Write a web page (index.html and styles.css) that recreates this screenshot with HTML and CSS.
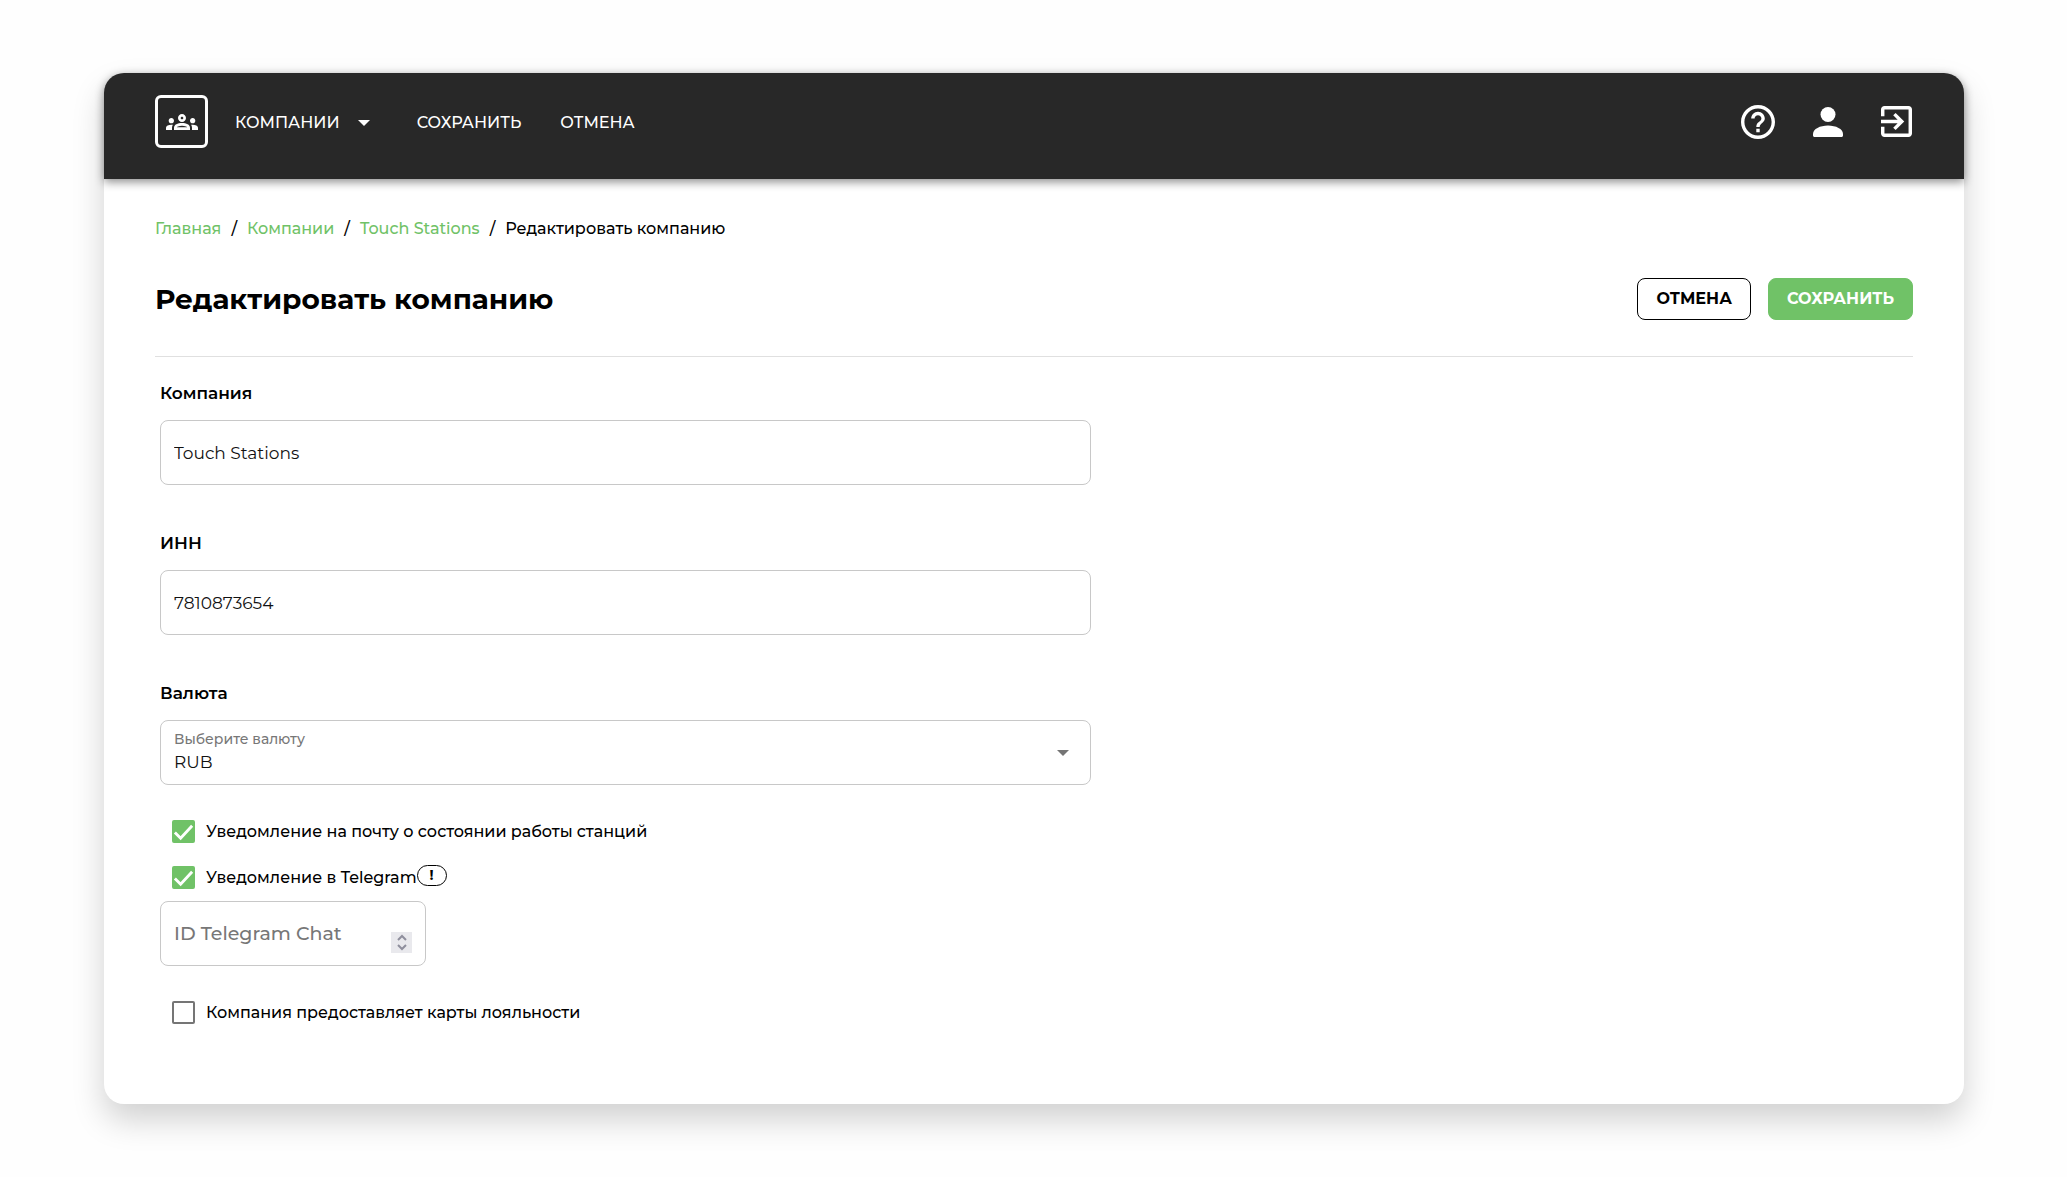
FILE: index.html
```html
<!DOCTYPE html>
<html lang="ru">

<head>
    <meta charset="UTF-8">
    <meta name="viewport" content="width=device-width, initial-scale=1.0">
    <title>Редактировать компанию</title>
    <link rel="stylesheet" href="styles.css">
</head>

<body>
    <div class="card">
        <header class="header">
            <a class="logo" href="#" aria-label="Компании">
                <svg viewBox="0 6 24 12" fill="currentColor">
                    <path d="M4 13c1.1 0 2-.9 2-2s-.9-2-2-2-2 .9-2 2 .9 2 2 2zm1.13 1.1c-.37-.06-.74-.1-1.13-.1-.99 0-1.93.21-2.78.58C.48 14.9 0 15.62 0 16.43V18h4.5v-1.61c0-.83.23-1.61.63-2.29zM20 13c1.1 0 2-.9 2-2s-.9-2-2-2-2 .9-2 2 .9 2 2 2zm4 3.43c0-.81-.48-1.53-1.22-1.85-.85-.37-1.79-.58-2.78-.58-.39 0-.76.04-1.13.1.4.68.63 1.46.63 2.29V18H24v-1.57zm-7.76-2.78c-1.17-.52-2.61-.9-4.24-.9-1.63 0-3.07.39-4.24.9C6.68 14.13 6 15.21 6 16.39V18h12v-1.61c0-1.18-.68-2.26-1.76-2.74zM8.07 16c.09-.23.13-.39.91-.69.97-.38 1.99-.56 3.02-.56s2.05.18 3.02.56c.77.3.81.46.91.69H8.07zM12 8c.55 0 1 .45 1 1s-.45 1-1 1-1-.45-1-1 .45-1 1-1m0-2c-1.66 0-3 1.34-3 3s1.34 3 3 3 3-1.34 3-3-1.34-3-3-3z"/>
                </svg>
            </a>
            <nav class="nav">
                <button class="nav-item" type="button">
                    КОМПАНИИ
                    <svg class="caret" viewBox="0 0 12 6" fill="currentColor"><path d="M0 0h12L6 6z"/></svg>
                </button>
                <button class="nav-item" type="submit" form="company">СОХРАНИТЬ</button>
                <button class="nav-item" type="reset" form="company">ОТМЕНА</button>
            </nav>
            <div class="tools">
                <a class="tool" href="#" aria-label="Помощь">
                    <svg width="34" height="34" viewBox="2 2 20 20" fill="currentColor">
                        <path d="M11 18h2v-2h-2v2zm1-16C6.48 2 2 6.48 2 12s4.48 10 10 10 10-4.48 10-10S17.52 2 12 2zm0 18c-4.41 0-8-3.59-8-8s3.59-8 8-8 8 3.59 8 8-3.59 8-8 8zm0-14c-2.21 0-4 1.79-4 4h2c0-1.1.9-2 2-2s2 .9 2 2c0 2-3 1.75-3 5h2c0-2.25 3-2.5 3-5 0-2.21-1.79-4-4-4z"/>
                    </svg>
                </a>
                <a class="tool" href="#" aria-label="Профиль">
                    <svg width="30" height="30" viewBox="0 0 30 30" fill="currentColor">
                        <circle cx="15" cy="7.5" r="7.5"/>
                        <path d="M0 27c0-5 7-8.5 15-8.5S30 22 30 27v1.5c0 .8-.7 1.5-1.5 1.5h-27C.7 30 0 29.3 0 28.5z"/>
                    </svg>
                </a>
                <a class="tool" href="#" aria-label="Выход">
                    <svg width="31" height="31" viewBox="3 3 18 18" fill="currentColor">
                        <path d="M10.09 15.59L11.5 17l5-5-5-5-1.41 1.41L12.67 11H3v2h9.67l-2.58 2.59zM19 3H5c-1.11 0-2 .9-2 2v4h2V5h14v14H5v-4H3v4c0 1.1.89 2 2 2h14c1.1 0 2-.9 2-2V5c0-1.1-.9-2-2-2z"/>
                    </svg>
                </a>
            </div>
        </header>

        <main class="content">
            <nav class="breadcrumbs">
                <a href="#">Главная</a>
                <span>/</span>
                <a href="#">Компании</a>
                <span>/</span>
                <a href="#">Touch Stations</a>
                <span>/</span>
                <span>Редактировать компанию</span>
            </nav>

            <div class="title-row">
                <h1>Редактировать компанию</h1>
                <div class="actions">
                    <button class="btn" type="reset" form="company">ОТМЕНА</button>
                    <button class="btn btn-green" type="submit" form="company">СОХРАНИТЬ</button>
                </div>
            </div>

            <form class="form" id="company">
                <div class="group">
                    <label for="name">Компания</label>
                    <input class="field" id="name" type="text" value="Touch Stations">
                </div>
                <div class="group">
                    <label for="inn">ИНН</label>
                    <input class="field" id="inn" type="text" value="7810873654">
                </div>
                <div class="group">
                    <label for="currency">Валюта</label>
                    <div class="select-wrap">
                        <span class="hint">Выберите валюту</span>
                        <select class="field" id="currency">
                            <option>RUB</option>
                        </select>
                        <svg class="caret" viewBox="0 0 12 6" fill="currentColor"><path d="M0 0h12L6 6z"/></svg>
                    </div>
                </div>

                <div class="checks">
                    <label class="check">
                        <input type="checkbox" checked>
                        <svg viewBox="0 0 24 24"><path d="M3 13l6 6L21 6"/></svg>
                        Уведомление на почту о состоянии работы станций
                    </label>
                    <div class="check-row">
                        <label class="check">
                            <input type="checkbox" checked>
                            <svg viewBox="0 0 24 24"><path d="M3 13l6 6L21 6"/></svg>
                            Уведомление в Telegram
                        </label>
                        <button class="info" type="button">!</button>
                    </div>
                </div>

                <div class="field chat">
                    <input type="number" placeholder="ID Telegram Chat" aria-label="ID Telegram Chat">
                    <svg class="stepper" viewBox="0 0 21 21">
                        <path d="M7 8l4-4 4 4M7 13l4 4 4-4"/>
                    </svg>
                </div>

                <label class="check">
                    <input type="checkbox">
                    <svg viewBox="0 0 24 24"><path d="M3 13l6 6L21 6"/></svg>
                    Компания предоставляет карты лояльности
                </label>
            </form>
        </main>
    </div>
</body>

</html>
```
FILE: styles.css
```css
* {
    margin: 0;
    padding: 0;
    box-sizing: border-box;
}

body {
    background: #fefefe;
    color: #000;
    font: 500 16px/24px Montserrat, Inter, sans-serif;
}

button,
input,
select {
    font: inherit;
    color: inherit;
    border: none;
    background: none;
}

button {
    cursor: pointer;
}

a {
    color: #70c267;
    text-decoration: none;
}

.card {
    margin: 73px 103px 73px 104px;
    background: #fff;
    border-radius: 20px;
    box-shadow: 0 16px 32px rgba(0, 0, 0, 0.18);
}

/* шапка */
.header {
    display: flex;
    align-items: center;
    padding: 22px 51px 31px;
    background: #282828;
    color: #fff;
    border-radius: 20px 20px 0 0;
    box-shadow: 0 3px 10px rgba(0, 0, 0, 0.45);
}

.logo {
    display: flex;
    align-items: center;
    justify-content: center;
    width: 53px;
    height: 53px;
    border: 3px solid #fff;
    border-radius: 6px;
    color: #fff;
}

.logo svg {
    width: 32px;
}

.nav {
    display: flex;
    gap: 39px;
    margin-left: 27px;
    padding-top: 2px;
}

.nav-item {
    display: flex;
    align-items: center;
    gap: 18px;
}

.nav-item .caret {
    margin-right: 8px;
}

.caret {
    width: 12px;
    height: 6px;
}

.tools {
    display: flex;
    align-items: center;
    gap: 38px;
    margin: 0 1px 0 auto;
}

.tool {
    display: flex;
    color: #fff;
}

/* содержимое */
.content {
    padding: 38px 51px 79px;
}

.breadcrumbs {
    display: flex;
    gap: 10px;
}

.title-row {
    display: flex;
    align-items: center;
    justify-content: space-between;
    margin-top: 37px;
    padding-bottom: 36px;
    border-bottom: 1px solid #e0e0e0;
}

h1 {
    font-size: 28px;
    font-weight: 700;
    line-height: 42px;
}

.actions {
    display: flex;
    gap: 17px;
}

.btn {
    height: 42px;
    padding: 0 18px;
    border: 1px solid #000;
    border-radius: 8px;
    font-weight: 700;
}

.btn-green {
    background: #70c267;
    border-color: #70c267;
    color: #fff;
}

/* форма */
.form {
    width: 53.5%;
    margin-top: 24px;
    padding: 0 5px;
}

.group {
    display: flex;
    flex-direction: column;
    gap: 15px;
    margin-bottom: 46px;
}

.group label {
    font-size: 17px;
    font-weight: 600;
}

.field {
    width: 100%;
    height: 65px;
    padding: 0 13px;
    border: 1px solid #c8c8c8;
    border-radius: 8px;
    font-size: 17px;
    font-weight: 400;
    color: #111;
}

.select-wrap {
    position: relative;
}

.select-wrap .field {
    display: block;
    padding-top: 18px;
    appearance: none;
}

.select-wrap .hint {
    position: absolute;
    top: 9px;
    left: 14px;
    font-size: 14px;
    line-height: 20px;
    color: #777;
}

.select-wrap .caret {
    position: absolute;
    top: 30px;
    right: 22px;
    color: #757575;
    pointer-events: none;
}

.checks {
    display: flex;
    flex-direction: column;
    gap: 21px;
    margin-top: -12px;
}

.check-row {
    display: flex;
}

.check {
    display: flex;
    align-items: center;
    gap: 11px;
    padding-left: 12px;
    line-height: 25px;
}

.check input {
    width: 23px;
    height: 23px;
    border: 2px solid #757575;
    border-radius: 2px;
    appearance: none;
}

.check input:checked {
    background: #70c267;
    border-color: #70c267;
}

/* галочка лежит поверх квадрата */
.check svg {
    width: 23px;
    height: 23px;
    margin-left: -34px;
    fill: none;
    stroke: #fff;
    stroke-width: 3;
    pointer-events: none;
}

.info {
    width: 30px;
    height: 21px;
    border: 1px solid #000;
    border-radius: 11px;
    font-size: 14px;
    font-weight: 700;
    line-height: 19px;
}

.chat {
    display: flex;
    align-items: center;
    width: 266px;
    margin: 11px 0 34px;
}

.chat input {
    flex: 1;
    min-width: 0;
    font-size: 19px;
    font-weight: 500;
    outline: none;
    appearance: textfield;
}

.chat input::placeholder {
    color: #777;
}

.stepper {
    width: 21px;
    height: 21px;
    margin-top: 18px;
    background: #e9e9ed;
    fill: none;
    stroke: #8f8f9d;
    stroke-width: 2;
}
```
